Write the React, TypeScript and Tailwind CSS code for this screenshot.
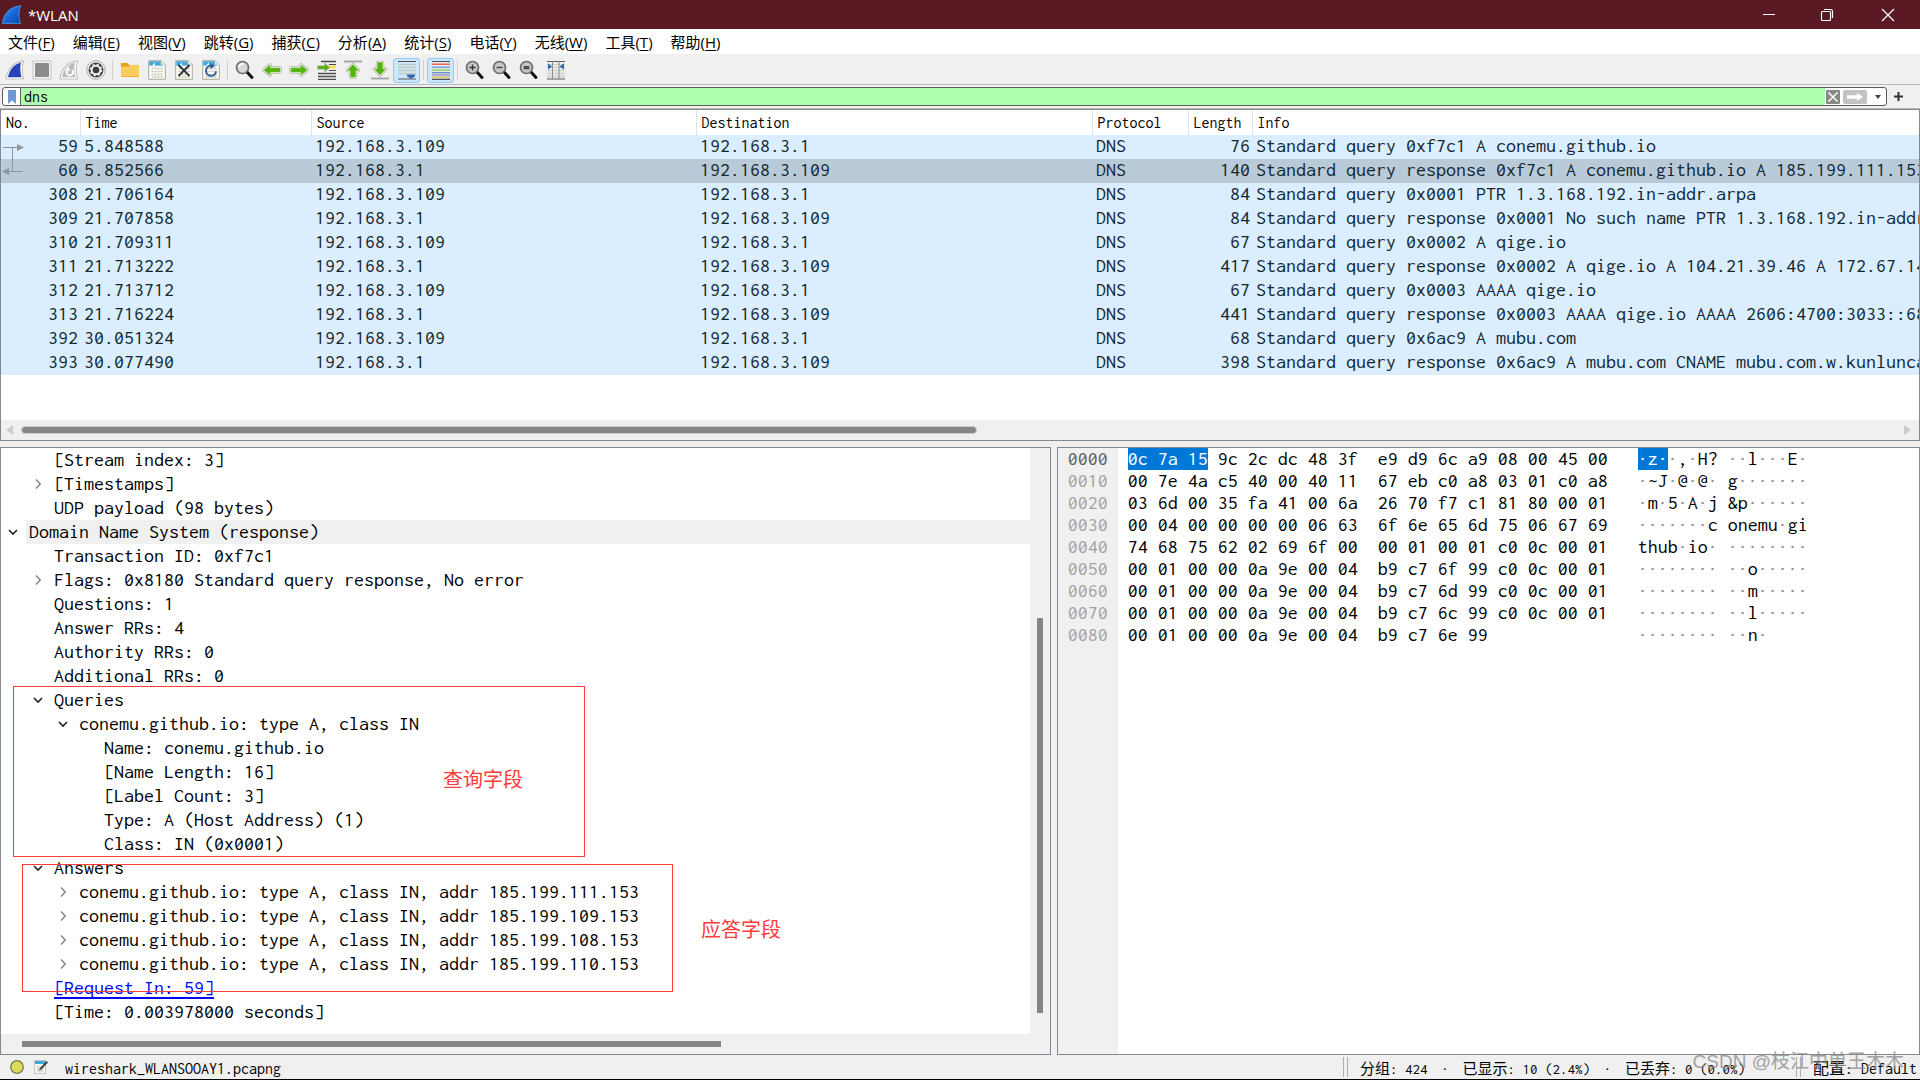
import type { ReactNode } from "react";

const MENUS: [string, string][] = [
  ["文件", "F"],
  ["编辑", "E"],
  ["视图", "V"],
  ["跳转", "G"],
  ["捕获", "C"],
  ["分析", "A"],
  ["统计", "S"],
  ["电话", "Y"],
  ["无线", "W"],
  ["工具", "T"],
  ["帮助", "H"],
];

const A = "192.168.3.109";
const B = "192.168.3.1";

const PACKETS: [number, string, string, string, number, string][] = [
  [59, "5.848588", A, B, 76, "Standard query 0xf7c1 A conemu.github.io"],
  [60, "5.852566", B, A, 140, "Standard query response 0xf7c1 A conemu.github.io A 185.199.111.153"],
  [308, "21.706164", A, B, 84, "Standard query 0x0001 PTR 1.3.168.192.in-addr.arpa"],
  [309, "21.707858", B, A, 84, "Standard query response 0x0001 No such name PTR 1.3.168.192.in-addr.arpa"],
  [310, "21.709311", A, B, 67, "Standard query 0x0002 A qige.io"],
  [311, "21.713222", B, A, 417, "Standard query response 0x0002 A qige.io A 104.21.39.46 A 172.67.143"],
  [312, "21.713712", A, B, 67, "Standard query 0x0003 AAAA qige.io"],
  [313, "21.716224", B, A, 441, "Standard query response 0x0003 AAAA qige.io AAAA 2606:4700:3033::6815"],
  [392, "30.051324", A, B, 68, "Standard query 0x6ac9 A mubu.com"],
  [393, "30.077490", B, A, 398, "Standard query response 0x6ac9 A mubu.com CNAME mubu.com.w.kunluncan"],
];

type Mark = "open" | "closed" | "none";

const TREE: { level: 0 | 1 | 2 | 3; mark: Mark; text: string; active?: boolean; link?: boolean }[] = [
  { level: 1, mark: "none", text: "[Stream index: 3]" },
  { level: 1, mark: "closed", text: "[Timestamps]" },
  { level: 1, mark: "none", text: "UDP payload (98 bytes)" },
  { level: 0, mark: "open", text: "Domain Name System (response)", active: true },
  { level: 1, mark: "none", text: "Transaction ID: 0xf7c1" },
  { level: 1, mark: "closed", text: "Flags: 0x8180 Standard query response, No error" },
  { level: 1, mark: "none", text: "Questions: 1" },
  { level: 1, mark: "none", text: "Answer RRs: 4" },
  { level: 1, mark: "none", text: "Authority RRs: 0" },
  { level: 1, mark: "none", text: "Additional RRs: 0" },
  { level: 1, mark: "open", text: "Queries" },
  { level: 2, mark: "open", text: "conemu.github.io: type A, class IN" },
  { level: 3, mark: "none", text: "Name: conemu.github.io" },
  { level: 3, mark: "none", text: "[Name Length: 16]" },
  { level: 3, mark: "none", text: "[Label Count: 3]" },
  { level: 3, mark: "none", text: "Type: A (Host Address) (1)" },
  { level: 3, mark: "none", text: "Class: IN (0x0001)" },
  { level: 1, mark: "open", text: "Answers" },
  { level: 2, mark: "closed", text: "conemu.github.io: type A, class IN, addr 185.199.111.153" },
  { level: 2, mark: "closed", text: "conemu.github.io: type A, class IN, addr 185.199.109.153" },
  { level: 2, mark: "closed", text: "conemu.github.io: type A, class IN, addr 185.199.108.153" },
  { level: 2, mark: "closed", text: "conemu.github.io: type A, class IN, addr 185.199.110.153" },
  { level: 1, mark: "none", text: "[Request In: 59]", link: true },
  { level: 1, mark: "none", text: "[Time: 0.003978000 seconds]" },
];

const INDENT = ["pl-0", "pl-[25px]", "pl-[50px]", "pl-[75px]"];

const HEX: [string, string, string][] = [
  ["0000", "0c 7a 15 9c 2c dc 48 3f e9 d9 6c a9 08 00 45 00", "·z··,·H? ··l···E·"],
  ["0010", "00 7e 4a c5 40 00 40 11 67 eb c0 a8 03 01 c0 a8", "·~J·@·@· g·······"],
  ["0020", "03 6d 00 35 fa 41 00 6a 26 70 f7 c1 81 80 00 01", "·m·5·A·j &p······"],
  ["0030", "00 04 00 00 00 00 06 63 6f 6e 65 6d 75 06 67 69", "·······c onemu·gi"],
  ["0040", "74 68 75 62 02 69 6f 00 00 01 00 01 c0 0c 00 01", "thub·io· ········"],
  ["0050", "00 01 00 00 0a 9e 00 04 b9 c7 6f 99 c0 0c 00 01", "········ ··o·····"],
  ["0060", "00 01 00 00 0a 9e 00 04 b9 c7 6d 99 c0 0c 00 01", "········ ··m·····"],
  ["0070", "00 01 00 00 0a 9e 00 04 b9 c7 6c 99 c0 0c 00 01", "········ ··l·····"],
  ["0080", "00 01 00 00 0a 9e 00 04 b9 c7 6e 99", "········ ··n·"],
];

const Ic = ({ children }: { children: ReactNode }) => (
  <svg width="20" height="20" viewBox="0 0 20 20" aria-hidden="true">
    {children}
  </svg>
);

const Fin = () => (
  <svg width="20" height="20" viewBox="0 0 20 20" aria-hidden="true">
    <defs>
      <linearGradient id="fin" x1="0" y1="0" x2="1" y2="1">
        <stop offset="0" stopColor="#3aa0f5" />
        <stop offset="0.5" stopColor="#1a66d8" />
        <stop offset="1" stopColor="#0b3fa8" />
      </linearGradient>
    </defs>
    <path d="M.5 18.500C1.500 8.500 8 1.500 19 .8C16.500 5 16.300 12 18.500 18.500Z" fill="url(#fin)" stroke="#4aa5ee" strokeWidth=".8" />
    <path d="M.5 18.700Q9 16.200 18.500 18.700Z" fill="#2f86d8" />
  </svg>
);

const FinTool = ({ grey }: { grey?: boolean }) => (
  <Ic>
    <path d="M.8 19C2.500 9 8 2 18.800.8C16.500 6 17 13 18.500 19Z" fill="#fff" stroke="#c4c4c0" strokeWidth="1.200" />
    <path d="M3 17.300C4.500 10 8.500 4.500 16 2.600C14.800 7 15.200 13 16.500 17.300Z" fill={grey ? "#bdbdbd" : "#2444b8"} />
    {grey && (
      <>
        <path d="M8 10.500a3.300 3.300 0 1 0 5.500-.5" fill="none" stroke="#fff" strokeWidth="1.800" />
        <path d="M6 10.500l3.500-4 1.500 4.500z" fill="#fff" />
      </>
    )}
  </Ic>
);

const Doc = ({ children }: { children?: ReactNode }) => (
  <Ic>
    <path d="M1.700.7H14l4.300 4V19.300H1.700Z" fill="#fdfdf5" stroke="#a8a89a" />
    <path d="M2.200 1.200H13.800L16 3.500V6H2.200Z" fill="#43a9dd" />
    <path d="M5 5.500l3-3v3z" fill="#fff" />
    <path d="M2.200 5.500h15.600v1H2.200z" fill="#dfeef5" />
    <path d="M14 1v3.700h4z" fill="#f2f2ea" stroke="#c6c6ba" strokeWidth=".5" />
    <path d="M4.500 8.500h11M4.500 11.500h11M4.500 14.500h11M4.500 17h11" stroke="#c0c0b4" strokeWidth="1.500" strokeDasharray="2 1" />
    {children}
  </Ic>
);

const ArrowIcon = ({ d, children }: { d: string; children?: ReactNode }) => (
  <Ic>
    {children}
    <path d={d} fill="#c0c0bc" stroke="#b5b5b0" strokeWidth="3.600" strokeLinejoin="round" />
    <path d={d} fill="#fff" stroke="#f4f4f2" strokeWidth="2" strokeLinejoin="round" />
    <path d={d} fill="#52b30d" stroke="#6cc22a" strokeWidth=".6" />
  </Ic>
);

const Lens = ({ kind }: { kind: "find" | "in" | "out" | "one" }) => (
  <Ic>
    <path d="M12 12L17 17.500" stroke="#111" strokeWidth="3" strokeLinecap="round" />
    <circle cx="7.500" cy="7.500" r="6" fill={kind === "find" ? "#d6dadb" : "#c6c8c8"} stroke="#6b6b6b" strokeWidth="1.700" />
    {kind === "find" && <path d="M4 7Q4.500 4 8 3.700" fill="none" stroke="#fff" strokeWidth="1.500" />}
    {kind === "in" && <path d="M4.500 7.500h6M7.500 4.500v6" stroke="#333" strokeWidth="1.300" />}
    {kind === "out" && <path d="M4.500 7.500h6" stroke="#444" strokeWidth="1.400" />}
    {kind === "one" && <path d="M4.700 6.700h5.600M4.700 8.500h5.600" stroke="#444" strokeWidth="1.400" />}
  </Ic>
);

const TOOLS: ([string, ReactNode, boolean?] | null)[] = [
  ["开始捕获", <FinTool />],
  [
    "停止捕获",
    <Ic>
      <rect x="1" y="1" width="18" height="18" fill="#f4f4f2" stroke="#c4c4c0" />
      <rect x="3" y="3" width="14" height="14" fill="#8b8b8b" />
    </Ic>,
  ],
  ["重新开始捕获", <FinTool grey />],
  [
    "捕获选项",
    <Ic>
      <circle cx="10" cy="10" r="9.300" fill="#f4f4f4" stroke="#a9a9a9" />
      <circle cx="10" cy="10" r="7.500" fill="#3a3d42" />
      <circle cx="10" cy="10" r="4.300" fill="none" stroke="#eee" strokeWidth="2" />
      <circle cx="10" cy="10" r="5.600" fill="none" stroke="#eee" strokeWidth="1.500" strokeDasharray="2.200 2.200" />
      <circle cx="10" cy="10" r="2.600" fill="#3a3d42" />
    </Ic>,
  ],
  null,
  [
    "打开",
    <Ic>
      <path d="M1 3h6.500l2 2H18.500v4H1z" fill="#e7a01c" />
      <path d="M1 6.500h7.500l1.500-1.500h9V17H1z" fill="#fccd5e" />
      <path d="M1 16h18v1H1z" fill="#edb13a" />
    </Ic>,
  ],
  ["保存", <Doc />],
  [
    "关闭",
    <Doc>
      <path d="M4.500 5L15.500 16M15.500 5L4.500 16" stroke="#2c3236" strokeWidth="1.800" />
    </Doc>,
  ],
  [
    "重新加载",
    <Doc>
      <path d="M10 5.800a5 5 0 1 0 5 5.500" fill="none" stroke="#2d5f9e" strokeWidth="2" />
      <path d="M9.500 3l4.500 3-4.500 3z" fill="#2d5f9e" />
    </Doc>,
  ],
  null,
  ["查找", <Lens kind="find" />],
  ["后退", <ArrowIcon d="M2 10l6-5v3h10v4H8v3z" />],
  ["前进", <ArrowIcon d="M18 10l-6-5v3H2v4h10v3z" />],
  [
    "转到分组",
    <Ic>
      <path d="M5 1.500h15M2 13.500h18M2 16.500h18M2 19.300h18" stroke="#4a4d50" strokeWidth="1.300" />
      <path d="M13 4.500h7M13 10.500h7" stroke="#4a4d50" strokeWidth="1.200" />
      <path d="M13 7h7" stroke="#fbe04a" strokeWidth="3" />
      <path d="M14 7.500L8.500 3v2.700H1.500v3.600h7V12z" fill="#52b30d" stroke="#b9bdb4" strokeWidth="1" />
    </Ic>,
  ],
  [
    "首个分组",
    <ArrowIcon d="M10 4.500l5.500 6h-3V17h-5v-6.500h-3z">
      <path d="M1 1.500h18" stroke="#a2a2a0" strokeWidth="1.800" />
    </ArrowIcon>,
  ],
  [
    "最后分组",
    <ArrowIcon d="M10 15l5.500-6h-3V2.500h-5V9h-3z">
      <path d="M1 18.500h18" stroke="#a2a2a0" strokeWidth="1.800" />
    </ArrowIcon>,
  ],
  [
    "自动滚动",
    <Ic>
      <path d="M1 4.500h18M1 7.500h18M1 10.500h18M1 13.500h18" stroke="#c6c8be" strokeWidth="1.700" />
      <path d="M1 1.500h18M1 19h18" stroke="#4c5052" strokeWidth="1.200" />
      <path d="M9.500 14.500h9l-1.500 3h-1.500L14 19l-1.500-1.500H11z" fill="#2f64ad" />
    </Ic>,
    true,
  ],
  null,
  [
    "着色",
    <Ic>
      <path d="M1 2.800h18M1 5.700h18M1 8.600h18M1 11.400h18M1 14h18M1 18h18" stroke="#e9e9e2" strokeWidth="1.400" />
      <path d="M1 1.500h18M1 19.300h18" stroke="#4c5052" strokeWidth="1.200" />
      <path d="M1 4.200h18" stroke="#ee4b4b" strokeWidth="1.300" />
      <path d="M1 7.200h18" stroke="#5f95cf" strokeWidth="1.200" />
      <path d="M1 10h18" stroke="#7ed34b" strokeWidth="1.300" />
      <path d="M1 12.700h18" stroke="#5b86c4" strokeWidth="1.200" />
      <path d="M1 15h18" stroke="#9c76b5" strokeWidth="1.100" />
      <path d="M1 17.200h18" stroke="#d8bf3c" strokeWidth="1.200" />
    </Ic>,
    true,
  ],
  null,
  ["放大", <Lens kind="in" />],
  ["缩小", <Lens kind="out" />],
  ["普通大小", <Lens kind="one" />],
  [
    "调整列宽",
    <Ic>
      <path d="M1 4.500h18M1 7.500h18M1 10.500h18M1 13.500h18M1 16.500h18" stroke="#cfcfc8" strokeWidth="1.400" />
      <path d="M1 1.500h18M1 19h18" stroke="#55595b" strokeWidth="1.200" />
      <path d="M6.500 1v18M13 1v18" stroke="#8d8d8d" />
      <path d="M2 3.500l4 3-4 3zM18 3.500l-4.500 3 4.500 3z" fill="#2b68b5" />
    </Ic>,
  ],
];

const Chevron = ({ mark }: { mark: Mark }) =>
  mark === "none" ? (
    <span className="w-[25px] shrink-0" />
  ) : (
    <button aria-label={mark === "open" ? "折叠" : "展开"} className="flex w-[25px] shrink-0 items-center justify-center pr-[2px]">
      <svg width="12" height="12" viewBox="0 0 12 12" fill="none" strokeWidth="1.600" aria-hidden="true">
        {mark === "open" ? <path d="M2 4l4 4 4-4" stroke="#222" /> : <path d="M4 1.500L8.200 6 4 10.500" stroke="#8a8a8a" />}
      </svg>
    </button>
  );

const Ascii = ({ text }: { text: string }) => (
  <>
    {text.split(/(·+)/).map((part, i) => (
      <span key={i} className={part.startsWith("·") ? "text-[#8c8c8c]" : ""}>
        {part}
      </span>
    ))}
  </>
);

const HEAD = "border-r border-[#e2e2e2] pl-[5px] text-left font-normal overflow-hidden";

export default function App() {
  return (
    <div className="flex h-screen flex-col overflow-hidden bg-[#f0f0f0] text-black font-['Open_Sans','Noto_Sans_CJK_SC',sans-serif]">
      <header className="flex h-[29px] shrink-0 items-center bg-[#5b1923] text-white">
        <div className="flex items-center gap-[6px] pl-[2px]">
          <Fin />
          <h1 className="text-[15px] leading-5">*WLAN</h1>
        </div>
        <div className="ml-auto flex">
          <button aria-label="最小化" className="flex h-[29px] w-[58px] items-center justify-center">
            <svg width="14" height="14" viewBox="0 0 14 14" stroke="#fff"><path d="M1 6.500h12" /></svg>
          </button>
          <button aria-label="还原" className="flex h-[29px] w-[58px] items-center justify-center">
            <svg width="14" height="14" viewBox="0 0 14 14" fill="none" stroke="#fff" strokeWidth="1.200">
              <rect x="1.500" y="3.500" width="9" height="9" rx="1" />
              <path d="M4 1.500h6.500a2 2 0 0 1 2 2V10" />
            </svg>
          </button>
          <button aria-label="关闭" className="flex h-[29px] w-16 items-center justify-center">
            <svg width="14" height="14" viewBox="0 0 14 14" stroke="#fff" strokeWidth="1.200"><path d="M1 1l12 12M13 1L1 13" /></svg>
          </button>
        </div>
      </header>

      <nav className="flex h-[27px] shrink-0 items-center gap-[18px] border-b-2 border-[#f0f0f0] bg-white pl-2 pt-px">
        {MENUS.map(([name, key]) => (
          <button key={name} className="text-[15px] leading-6">
            {name}(<span className="underline underline-offset-2">{key}</span>)
          </button>
        ))}
      </nav>

      <div className="flex h-[29px] shrink-0 items-center border-b border-[#b8b8b8] bg-[#f0f0f0] pl-px">
        {TOOLS.map((t, i) =>
          t ? (
            <button
              key={i}
              aria-label={t[0]}
              className={
                "flex h-[25px] w-[27px] items-center justify-center rounded-[3px] border " +
                (t[2] ? "border-[#90c8f6] bg-[#cce8ff]" : "border-transparent")
              }
            >
              {t[1]}
            </button>
          ) : (
            <span key={i} className="mx-[3px] h-5 w-px bg-[#d0d0d0]" />
          ),
        )}
      </div>

      <div className="flex h-6 shrink-0 items-center border-b border-[#b8b8b8] pl-[2px] pr-4">
        <div className="flex h-[19px] flex-1 overflow-hidden rounded-[3px] border border-[#5c5c5c] bg-white">
          <button aria-label="书签" className="flex w-[18px] items-center justify-center border-r border-[#5c5c5c]">
            <svg width="8" height="14" viewBox="0 0 8 14"><path d="M0 0h8v14l-4-3.500L0 14z" fill="#6f9bd1" /></svg>
          </button>
          <input
            aria-label="显示过滤器"
            defaultValue="dns"
            className="min-w-0 flex-1 bg-[#afffaf] pl-[3px] text-[16px] leading-4 outline-none font-['Inconsolata','Noto_Sans_Mono_CJK_SC',monospace]"
          />
          <div className="flex items-center gap-[3px] pl-px">
            <button aria-label="清除">
              <svg width="14" height="14" viewBox="0 0 14 14">
                <rect width="14" height="14" rx="1" fill="#888884" />
                <path d="M2.500 2.500l9 9M11.500 2.500l-9 9" stroke="#fff" strokeWidth="1.500" />
              </svg>
            </button>
            <button aria-label="应用">
              <svg width="24" height="14" viewBox="0 0 24 14">
                <rect width="24" height="14" rx="2" fill="#c3c3c3" />
                <path d="M4 5.300h10V3l6 4-6 4V8.700H4z" fill="#fff" />
              </svg>
            </button>
            <button aria-label="历史" className="flex w-4 justify-center">
              <svg width="6" height="4" viewBox="0 0 6 4"><path d="M0 0h6L3 4z" fill="#444" /></svg>
            </button>
          </div>
        </div>
        <button aria-label="添加" className="ml-[5px] flex w-3 justify-center">
          <svg width="9" height="9" viewBox="0 0 9 9" stroke="#333" strokeWidth="2"><path d="M4.500 0v9M0 4.500h9" /></svg>
        </button>
      </div>

      <section className="shrink-0 overflow-hidden border border-[#828790] bg-white">
        <table className="w-full table-fixed border-collapse text-[20px] leading-[22px] text-[#12272e] font-['Inconsolata','Noto_Sans_Mono_CJK_SC',monospace]">
          <colgroup>
            <col className="w-[79px]" />
            <col className="w-[231px]" />
            <col className="w-[385px]" />
            <col className="w-[396px]" />
            <col className="w-[96px]" />
            <col className="w-[64px]" />
            <col />
          </colgroup>
          <thead className="text-[16px] text-black">
            <tr className="h-[25px]">
              <th className={HEAD}>No.</th>
              <th className={HEAD}>Time</th>
              <th className={HEAD}>Source</th>
              <th className={HEAD}>Destination</th>
              <th className={HEAD}>Protocol</th>
              <th className={HEAD}>Length</th>
              <th className="pl-[5px] text-left font-normal">Info</th>
            </tr>
          </thead>
          <tbody>
            {PACKETS.map((p, i) => (
              <tr key={p[0]} className={i === 1 ? "bg-[#b9cbd9]" : "bg-[#daeeff]"}>
                <td className="relative pr-[2px] pb-[2px] text-right">
                  {i === 0 && (
                    <svg className="absolute left-0 top-0" width="26" height="48" viewBox="0 0 26 48" fill="none" stroke="#8b989e" aria-hidden="true">
                      <path d="M2 12.500h15M11.500 12.500v24M7 36.500h15" />
                      <path d="M16 9l7 3.500-7 3.500zM8 33l-7 3.500L8 40z" fill="#8b989e" stroke="none" />
                    </svg>
                  )}
                  {p[0]}
                </td>
                <td className="pb-[2px] pl-1">{p[1]}</td>
                <td className="pb-[2px] pl-1">{p[2]}</td>
                <td className="pb-[2px] pl-1">{p[3]}</td>
                <td className="pb-[2px] pl-1">DNS</td>
                <td className="pr-[2px] pb-[2px] text-right">{p[4]}</td>
                <td className="overflow-hidden whitespace-nowrap pb-[2px] pl-1">{p[5]}</td>
              </tr>
            ))}
          </tbody>
        </table>
        <div className="mt-[45px] flex h-5 items-center justify-between bg-[#f0f0f0] pl-[5px] pr-2">
          <svg width="7" height="10" viewBox="0 0 7 10" aria-hidden="true"><path d="M7 0v10L0 5z" fill="#cdcdcd" /></svg>
          <div className="ml-2 mr-[9px] flex-1">
            <div className="h-[8px] w-[51%] rounded-sm border border-[#cdcdcd] bg-[#858585]" />
          </div>
          <svg width="7" height="10" viewBox="0 0 7 10" aria-hidden="true"><path d="M0 0v10L7 5z" fill="#cdcdcd" /></svg>
        </div>
      </section>

      <main className="mt-[6px] flex min-h-0 flex-1 gap-[6px]">
        <section className="flex min-w-0 flex-[1051] flex-col border border-[#828790] bg-white">
          <div className="flex min-h-0 flex-1">
            <div className="relative min-w-0 flex-1">
              <ul className="text-[20px] leading-6 font-['Inconsolata','Noto_Sans_Mono_CJK_SC',monospace]">
                {TREE.map((n, i) => (
                  <li key={i} className={"flex h-6 whitespace-pre " + INDENT[n.level]}>
                    <Chevron mark={n.mark} />
                    <span className={"flex-1 pl-[3px] " + (n.active ? "bg-[#f0f0f0]" : "")}>
                      {n.link ? (
                        <a href="#59" className="text-[#0000ff] underline underline-offset-3">
                          {n.text}
                        </a>
                      ) : (
                        n.text
                      )}
                    </span>
                  </li>
                ))}
              </ul>
              <div className="absolute left-[12px] top-[238px] h-[171px] w-[572px] border border-[#ff3b3b]">
                <span className="absolute left-[429px] top-[79px] text-[20px] leading-7 text-[#ff3b3b]">查询字段</span>
              </div>
              <div className="absolute left-[21px] top-[416px] h-[128px] w-[651px] border border-[#ff3b3b]" />
              <span className="absolute left-[700px] top-[468px] text-[20px] leading-7 text-[#ff3b3b]">应答字段</span>
            </div>
            <div className="flex w-5 flex-col items-center bg-[#f0f0f0] pt-[170px] pb-[21px]">
              <div className="w-[6px] flex-1 bg-[#858585]" />
            </div>
          </div>
          <div className="flex h-5 items-center bg-[#f0f0f0] pl-[21px]">
            <div className="h-[6px] w-[68%] bg-[#858585]" />
          </div>
        </section>

        <section className="flex min-w-0 flex-[863] border border-[#828790] bg-white">
          <table className="h-full border-collapse text-[20px] leading-[22px] font-['Inconsolata','Noto_Sans_Mono_CJK_SC',monospace]">
            <tbody>
              {HEX.map(([off, bytes, ascii], r) => {
                const cells = bytes.split(" ");
                return (
                  <tr key={off} className="h-[22px]">
                    <th className={"w-[60px] bg-[#f0f0f0] p-0 text-center font-normal " + (r === 0 ? "text-[#5f5f5f]" : "text-[#a3a3a3]")}>{off}</th>
                    <td className="w-[260px] whitespace-pre p-0 pl-[10px]">
                      {r === 0 ? (
                        <>
                          <span className="inline-block bg-[#0078d7] text-white">{cells.slice(0, 3).join(" ")}</span>
                          {" " + cells.slice(3, 8).join(" ")}
                        </>
                      ) : (
                        cells.slice(0, 8).join(" ")
                      )}
                    </td>
                    <td className="w-[260px] whitespace-pre p-0">{cells.slice(8).join(" ")}</td>
                    <td className="whitespace-pre p-0">
                      {r === 0 ? (
                        <>
                          <span className="inline-block bg-[#0078d7] text-white">{ascii.slice(0, 3)}</span>
                          <Ascii text={ascii.slice(3)} />
                        </>
                      ) : (
                        <Ascii text={ascii} />
                      )}
                    </td>
                  </tr>
                );
              })}
              <tr>
                <td className="bg-[#f0f0f0] p-0" />
                <td colSpan={3} className="p-0" />
              </tr>
            </tbody>
          </table>
        </section>
      </main>

      <footer className="relative flex h-[25px] shrink-0 items-center border-b border-black text-[16px] leading-5 whitespace-pre font-['Inconsolata','Noto_Sans_Mono_CJK_SC',monospace]">
        <button aria-label="专家信息" className="ml-[10px]">
          <svg width="14" height="14" viewBox="0 0 14 14"><circle cx="7" cy="7" r="6.300" fill="#dcdc5c" stroke="#77774a" strokeWidth="1.200" /></svg>
        </button>
        <button aria-label="捕获文件注释" className="ml-[10px]">
          <svg width="14" height="14" viewBox="0 0 14 14">
            <rect x=".5" y=".5" width="11" height="13" fill="#f3f3ee" stroke="#c9c9c4" />
            <path d="M1 1h10v3H1z" fill="#43a9dd" />
            <path d="M3 7h6M3 9h6M3 11h6" stroke="#c2c2bb" />
            <path d="M5 10.500L6 8l6.500-7L14 2.500 7.500 9.500z" fill="#3f464a" />
          </svg>
        </button>
        <span className="ml-[17px] pt-1">wireshark_WLANSOOAY1.pcapng</span>
        <div className="ml-auto flex h-full items-center">
          <span className="mr-[12px] h-5 w-[5px] border-x border-[#b0b0b0]" />
          <span className="w-[436px] pt-1 text-[15px]">分组: 424 <span className="inline-block w-5 text-center">·</span> 已显示: 10 (2.4%) <span className="inline-block w-5 text-center">·</span> 已丢弃: 0 (0.0%)</span>
          <span className="mr-[12px] h-5 w-[5px] border-x border-[#b0b0b0]" />
          <button className="mr-[3px] pt-1">配置: Default</button>
        </div>
        <span className="absolute right-[16px] bottom-[5px] text-[19px] leading-6 text-[#8c8c8c]/80 font-['Liberation_Sans','Noto_Sans_CJK_SC',sans-serif]">
          CSDN @枝江中单王木木
        </span>
      </footer>
    </div>
  );
}
